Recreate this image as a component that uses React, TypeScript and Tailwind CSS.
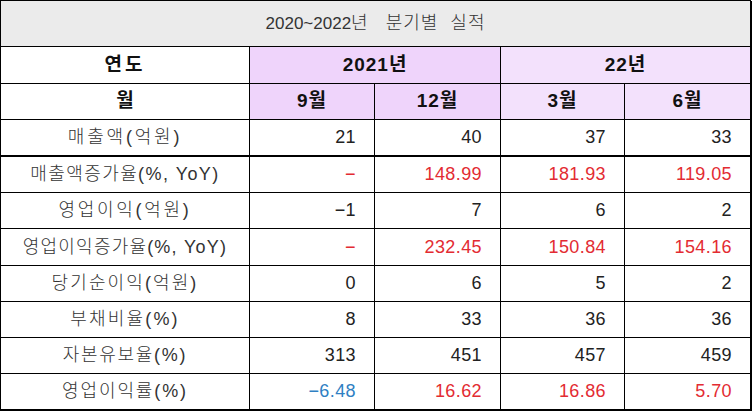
import React from "react";

type Val = { v: string; c?: "red" | "blue" };

const rows: { label: string; vals: Val[]; thick?: boolean; h: string; t: string }[] = [
  { label: "매출액(억원)", vals: [{ v: "21" }, { v: "40" }, { v: "37" }, { v: "33" }], thick: true, h: "h-[37px]", t: "tracking-[2.8px]" },
  { label: "매출액증가율(%, YoY)", vals: [{ v: "−", c: "red" }, { v: "148.99", c: "red" }, { v: "181.93", c: "red" }, { v: "119.05", c: "red" }], h: "h-[36px]", t: "tracking-[1.4px]" },
  { label: "영업이익(억원)", vals: [{ v: "−1" }, { v: "7" }, { v: "6" }, { v: "2" }], h: "h-[36px]", t: "tracking-[2.7px]" },
  { label: "영업이익증가율(%, YoY)", vals: [{ v: "−", c: "red" }, { v: "232.45", c: "red" }, { v: "150.84", c: "red" }, { v: "154.16", c: "red" }], h: "h-[37px]", t: "tracking-[1.2px]" },
  { label: "당기순이익(억원)", vals: [{ v: "0" }, { v: "6" }, { v: "5" }, { v: "2" }], h: "h-[36px]", t: "tracking-[2.1px]" },
  { label: "부채비율(%)", vals: [{ v: "8" }, { v: "33" }, { v: "36" }, { v: "36" }], h: "h-[36px]", t: "tracking-[2.2px]" },
  { label: "자본유보율(%)", vals: [{ v: "313" }, { v: "451" }, { v: "457" }, { v: "459" }], h: "h-[36px]", t: "tracking-[1.7px]" },
  { label: "영업이익률(%)", vals: [{ v: "−6.48", c: "blue" }, { v: "16.62", c: "red" }, { v: "16.86", c: "red" }, { v: "5.70", c: "red" }], thick: true, h: "h-[37px]", t: "tracking-[1.9px]" },
];

const font = { fontFamily: '"Liberation Sans", "Noto Sans CJK KR", sans-serif' };

export default function App() {
  return (
    <div className="w-[752px] h-[412px] bg-white" style={font}>
      <div className="w-[751px] border-t border-l border-black grid grid-cols-[249px_125px_126px_124px_127px]">
        {/* title */}
        <div className="col-span-5 h-[46px] bg-[#ebebeb] border-b border-r-2 border-black flex items-center justify-center text-[17px] font-light text-[#333]">
          <span>2020~2022</span>
          <span className="text-[18px]">년</span>
          <span className="ml-[18px] text-[18px] tracking-[1px]">분기별</span>
          <span className="ml-[12px] text-[18px] tracking-[1px]">실적</span>
        </div>

        {/* year row */}
        <div className="h-[37px] border-b border-r border-black flex items-center justify-center font-bold text-[19px] text-[#111] tracking-[3px]">
          연도
        </div>
        <div className="col-span-2 h-[37px] bg-[#efd4fb] border-b border-r border-black flex items-center justify-center font-bold text-[19px] text-[#111] tracking-[1px]">
          2021년
        </div>
        <div className="col-span-2 h-[37px] bg-[#f3e1fc] border-b border-r-2 border-black flex items-center justify-center font-bold text-[19px] text-[#111] tracking-[1px]">
          22년
        </div>

        {/* month row */}
        <div className="h-[36px] border-b border-r border-black flex items-center justify-center font-bold text-[19px] text-[#111]">
          월
        </div>
        <div className="h-[36px] bg-[#efd4fb] border-b border-r border-black flex items-center justify-center font-bold text-[19px] text-[#111] tracking-[1px]">
          9월
        </div>
        <div className="h-[36px] bg-[#efd4fb] border-b border-r border-black flex items-center justify-center font-bold text-[19px] text-[#111] tracking-[1px]">
          12월
        </div>
        <div className="h-[36px] bg-[#f3e1fc] border-b border-r border-black flex items-center justify-center font-bold text-[19px] text-[#111] tracking-[1px]">
          3월
        </div>
        <div className="h-[36px] bg-[#f3e1fc] border-b border-r-2 border-black flex items-center justify-center font-bold text-[19px] text-[#111] tracking-[1px]">
          6월
        </div>

        {rows.map((r) => (
          <React.Fragment key={r.label}>
            <div
              className={`${r.h} ${r.thick ? "border-b-2" : "border-b"} border-r border-black flex items-center justify-center text-[18px] font-light text-[#333] ${r.t}`}
            >
              {r.label}
            </div>
            {r.vals.map((v, i) => (
              <div
                key={i}
                className={`${r.h} ${r.thick ? "border-b-2" : "border-b"} ${i === 3 ? "border-r-2" : "border-r"} border-black flex items-center justify-end pr-[18px] text-[18px] tracking-[0.4px] ${
                  v.c === "red" ? "text-[#e32b32]" : v.c === "blue" ? "text-[#2f80c3]" : "text-[#222]"
                }`}
              >
                {v.v}
              </div>
            ))}
          </React.Fragment>
        ))}
      </div>
    </div>
  );
}
